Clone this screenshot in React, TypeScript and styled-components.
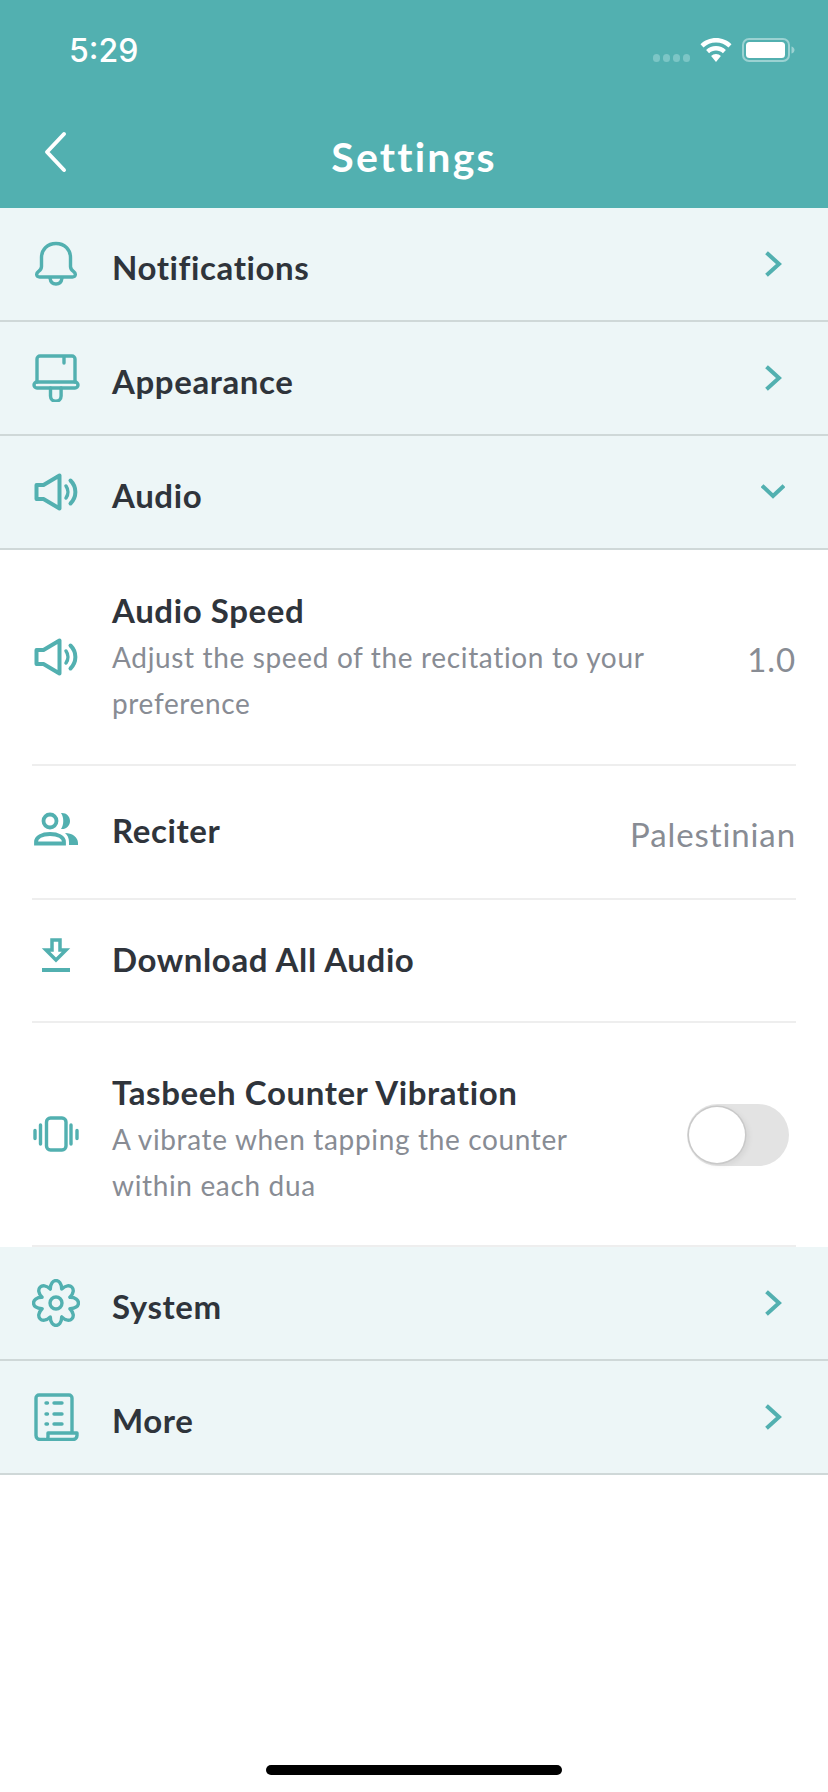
import React from 'react';
import styled, {createGlobalStyle} from 'styled-components';

const teal = '#52b0b0';

const Global = createGlobalStyle`
  html, body {
    margin: 0;
    padding: 0;
    background: #fff;
  }
  body {
    font-family: Lato, "Noto Sans", sans-serif;
  }
`;

const Page = styled.div`
  width: 828px;
  height: 1792px;
  display: flex;
  flex-direction: column;
  overflow: hidden;
`;

const Header = styled.header`
  height: 208px;
  flex: none;
  background: ${teal};
  color: #fff;
  display: flex;
  flex-direction: column;
  box-sizing: border-box;
  padding-top: 32px;
`;

const StatusBar = styled.div`
  height: 36px;
  display: flex;
  align-items: center;
  padding: 0 33px 0 69px;
`;

const Time = styled.span`
  font-family: Inter, "Liberation Sans", sans-serif;
  font-size: 32px;
  font-weight: 500;
  flex: 1;
`;

const StatusIcons = styled.div`
  display: flex;
  align-items: center;
  gap: 10px;
`;

const NavBar = styled.div`
  height: 84px;
  margin-top: 46px;
  display: flex;
  align-items: center;
  justify-content: center;
  position: relative;
`;

const BackButton = styled.svg`
  position: absolute;
  left: 40px;
  top: 16px;
`;

const Title = styled.h1`
  margin: 0;
  font-size: 41px;
  font-weight: 700;
  letter-spacing: 2.2px;
`;

const MenuRow = styled.div`
  height: 114px;
  flex: none;
  box-sizing: border-box;
  background: #edf6f7;
  border-bottom: 2px solid #cfd8d8;
  display: flex;
  align-items: center;
  padding: 0 43px 0 32px;
`;

const IconSlot = styled.div`
  width: 48px;
  height: 48px;
  flex: none;
  margin-right: 32px;
  color: ${teal};
  svg {
    display: block;
  }
`;

const RowLabel = styled.div`
  flex: 1;
  font-size: 33px;
  font-weight: 700;
  letter-spacing: 0.6px;
  color: #2f343b;
  padding-top: 5px;
  font-variant-ligatures: none;
`;

const Chevron = styled.svg`
  flex: none;
`;

const AudioPanel = styled.section`
  flex: none;
  background: #fff;
`;

const SubRow = styled.div<{$height: number}>`
  height: ${p => p.$height}px;
  box-sizing: border-box;
  margin: 0 32px;
  border-bottom: 2px solid #eeeeee;
  display: flex;
  align-items: center;
`;

const TextBlock = styled.div<{$shift: number}>`
  flex: 1;
  margin-top: ${p => p.$shift}px;
`;

const SubTitle = styled.div`
  font-size: 33px;
  font-weight: 700;
  letter-spacing: 0.6px;
  color: #2f343b;
  line-height: 48px;
`;

const SubText = styled.div`
  font-size: 28px;
  letter-spacing: 0.65px;
  color: #888c94;
  line-height: 46px;
  white-space: nowrap;
`;

const Value = styled.div`
  font-size: 33px;
  letter-spacing: 0.9px;
  color: #888c94;
  padding-top: 3px;
`;

const Toggle = styled.div`
  width: 102px;
  height: 62px;
  border-radius: 31px;
  background: #e3e3e3;
  margin: 2px 7px 0 0;
  position: relative;
  flex: none;
`;

const Knob = styled.div`
  position: absolute;
  left: 2px;
  top: 3px;
  width: 56px;
  height: 56px;
  border-radius: 50%;
  background: #fff;
  box-shadow: 0 0 0 1.5px #c9c9c9, 3px 2px 6px rgba(0, 0, 0, 0.08);
`;

const HomeBar = styled.div`
  width: 296px;
  height: 10px;
  border-radius: 5px;
  background: #000;
  margin: auto auto 17px;
`;

const Icon: React.FC<{children: React.ReactNode}> = ({children}) => (
  <IconSlot>
    <svg width="48" height="48" viewBox="0 0 48 48" fill="none" stroke="currentColor" strokeWidth="3.4" strokeLinecap="round" strokeLinejoin="round">
      {children}
    </svg>
  </IconSlot>
);

const Bell = () => (
  <Icon>
    <path d="M24 3.500c-8.500 0-14.500 6-14.500 14v9c0 2-1 3.500-3 5-3 2-2 5.500 1 5.500h33c3 0 4-3.500 1-5.500-2-1.500-3-3-3-5v-9c0-8-6-14-14.500-14z" />
    <path d="M18 38c.5 4 3 6 6 6s5.500-2 6-6" />
  </Icon>
);

const Brush = () => (
  <Icon>
    <path d="M5 28V5a3 3 0 0 1 3-3h32a3 3 0 0 1 3 3v23" />
    <rect x="2" y="28" width="44" height="6" rx="3" />
    <path d="M18.500 34v8a5.300 5.300 0 0 0 10.600 0v-8" />
    <path d="M32 3v6" />
  </Icon>
);

const Speaker = () => (
  <Icon>
    <path d="M4.500 17h7L27.500 7.500v33L11.500 31h-7z" strokeWidth="4" />
    <path d="M34 18c2.500 3.500 2.500 8.500 0 12" strokeWidth="3.500" />
    <path d="M38.500 12.500c6.500 6.500 6.500 16.500 0 23" strokeWidth="4" />
  </Icon>
);

const People = () => (
  <Icon>
    <g transform="translate(0 -1)">
      <circle cx="18" cy="14" r="6.500" strokeWidth="3.800" />
      <path d="M4 36.500v-1.500c0-5 6-8 14-8s14 3 14 8v1.500z" strokeWidth="3.800" strokeLinejoin="miter" strokeLinecap="butt" />
      <path d="M29 6c5-.5 9 3 9 8s-4 8.500-9 8c3-4.500 3-11.500 0-16z" fill="currentColor" stroke="none" />
      <path d="M33 26c7 0 13 4 13 10v2h-9v-3c0-4-1.500-7-4-9z" fill="currentColor" stroke="none" />
    </g>
  </Icon>
);

const Download = () => (
  <Icon>
    <g transform="translate(0 -2)">
      <path d="M20 5h8v10h6L24 25 14 15h6z" strokeWidth="3.500" strokeLinejoin="miter" strokeLinecap="butt" />
      <rect x="10" y="33" width="28" height="4" fill="currentColor" stroke="none" />
    </g>
  </Icon>
);

const Vibrate = () => (
  <Icon>
    <rect x="14.500" y="8" width="19.500" height="32" rx="4" />
    <path d="M8.500 15v19M39 15v19M3 20.500v8M45 20.500v8" />
  </Icon>
);

const polar = (r: number, deg: number) => {
  const a = ((deg - 90) * Math.PI) / 180;
  return `${(24 + r * Math.cos(a)).toFixed(1)} ${(24 + r * Math.sin(a)).toFixed(1)}`;
};

// eight rounded teeth, one of them pointing straight up
const gearPath = [0, 45, 90, 135, 180, 225, 270, 315].reduce(
  (d, t) => `${d} C${polar(26, t - 13)} ${polar(26, t + 13)} ${polar(15, t + 22.5)}`,
  `M${polar(15, -22.5)}`,
) + 'z';

const Cog = () => (
  <Icon>
    <path d={gearPath} />
    <circle cx="24" cy="24" r="6" />
  </Icon>
);

const Scroll = () => (
  <Icon>
    <path d="M13 46.500H8a4 4 0 0 1-4-4V5a3 3 0 0 1 3-3h30a3 3 0 0 1 3 3v34" />
    <path d="M14 46.500c1.500 0 2-1.500 2-3V40h29v2.500a4 4 0 0 1-4 4z" />
    <path d="M14 10h1.500M22 10h8M14 21h1.500M22 21h8M14 31h1.500M22 31h8" />
  </Icon>
);

const RightChevron = () => (
  <Chevron width="24" height="28" viewBox="0 0 24 28" fill="none" stroke={teal} strokeWidth="4" strokeLinecap="square">
    <path d="M7 4l11 10L7 24" />
  </Chevron>
);

const DownChevron = () => (
  <Chevron width="24" height="28" viewBox="0 0 24 28" fill="none" stroke={teal} strokeWidth="4" strokeLinecap="square">
    <path d="M2.500 9l9.500 9 9.500-9" />
  </Chevron>
);

const App: React.FC = () => (
  <Page>
    <Global />
    <Header>
      <StatusBar>
        <Time>5:29</Time>
        <StatusIcons>
          <svg width="37" height="24" viewBox="0 0 37 24" fill="#7cc6c6">
            <rect x="0" y="16" width="7" height="8" rx="3.500" />
            <rect x="10" y="16" width="7" height="8" rx="3.500" />
            <rect x="20" y="16" width="7" height="8" rx="3.500" />
            <rect x="30" y="16" width="7" height="8" rx="3.500" />
          </svg>
          <svg width="32" height="24" viewBox="0 0 32 24" fill="#fff">
            <path d="M16 0C10 0 4.500 2.300.5 6.200l3 3.300C6.700 6.400 11.100 4.500 16 4.500s9.300 1.900 12.500 5l3-3.300C27.500 2.300 22 0 16 0z" />
            <path d="M16 8c-3.800 0-7.300 1.500-9.900 4l3 3.200c1.800-1.800 4.200-2.800 6.900-2.800s5.100 1 6.900 2.800l3-3.200C23.300 9.500 19.800 8 16 8z" />
            <path d="M16 16c-1.900 0-3.600.7-4.900 2l4.900 6 4.900-6c-1.300-1.300-3-2-4.900-2z" />
          </svg>
          <svg width="53" height="24" viewBox="0 0 53 24">
            <rect x="1" y="1" width="46" height="22" rx="6" fill="none" stroke="#9bd2d2" strokeWidth="2" />
            <rect x="4" y="4" width="39" height="16" rx="3.500" fill="#fff" />
            <path d="M49.500 8.500c2 .5 3 2 3 3.500s-1 3-3 3.500z" fill="#9bd2d2" />
          </svg>
        </StatusIcons>
      </StatusBar>
      <NavBar>
        <BackButton width="30" height="44" viewBox="0 0 30 44" fill="none" stroke="#fff" strokeWidth="4" strokeLinecap="round" strokeLinejoin="round">
          <path d="M24 4L7 22l17 18" />
        </BackButton>
        <Title>Settings</Title>
      </NavBar>
    </Header>

    <MenuRow><Bell /><RowLabel>Notifications</RowLabel><RightChevron /></MenuRow>
    <MenuRow><Brush /><RowLabel>Appearance</RowLabel><RightChevron /></MenuRow>
    <MenuRow><Speaker /><RowLabel>Audio</RowLabel><DownChevron /></MenuRow>

    <AudioPanel>
      <SubRow $height={216}>
        <Speaker />
        <TextBlock $shift={-3}>
          <SubTitle>Audio Speed</SubTitle>
          <SubText>Adjust the speed of the recitation to your<br />preference</SubText>
        </TextBlock>
        <Value>1.0</Value>
      </SubRow>
      <SubRow $height={134}>
        <People />
        <TextBlock $shift={-4}><SubTitle>Reciter</SubTitle></TextBlock>
        <Value>Palestinian</Value>
      </SubRow>
      <SubRow $height={123}>
        <Download />
        <TextBlock $shift={-4}><SubTitle>Download All Audio</SubTitle></TextBlock>
      </SubRow>
      <SubRow $height={224}>
        <Vibrate />
        <TextBlock $shift={7}>
          <SubTitle>Tasbeeh Counter Vibration</SubTitle>
          <SubText>A vibrate when tapping the counter<br />within each dua</SubText>
        </TextBlock>
        <Toggle><Knob /></Toggle>
      </SubRow>
    </AudioPanel>

    <MenuRow><Cog /><RowLabel>System</RowLabel><RightChevron /></MenuRow>
    <MenuRow><Scroll /><RowLabel>More</RowLabel><RightChevron /></MenuRow>

    <HomeBar />
  </Page>
);

export default App;
